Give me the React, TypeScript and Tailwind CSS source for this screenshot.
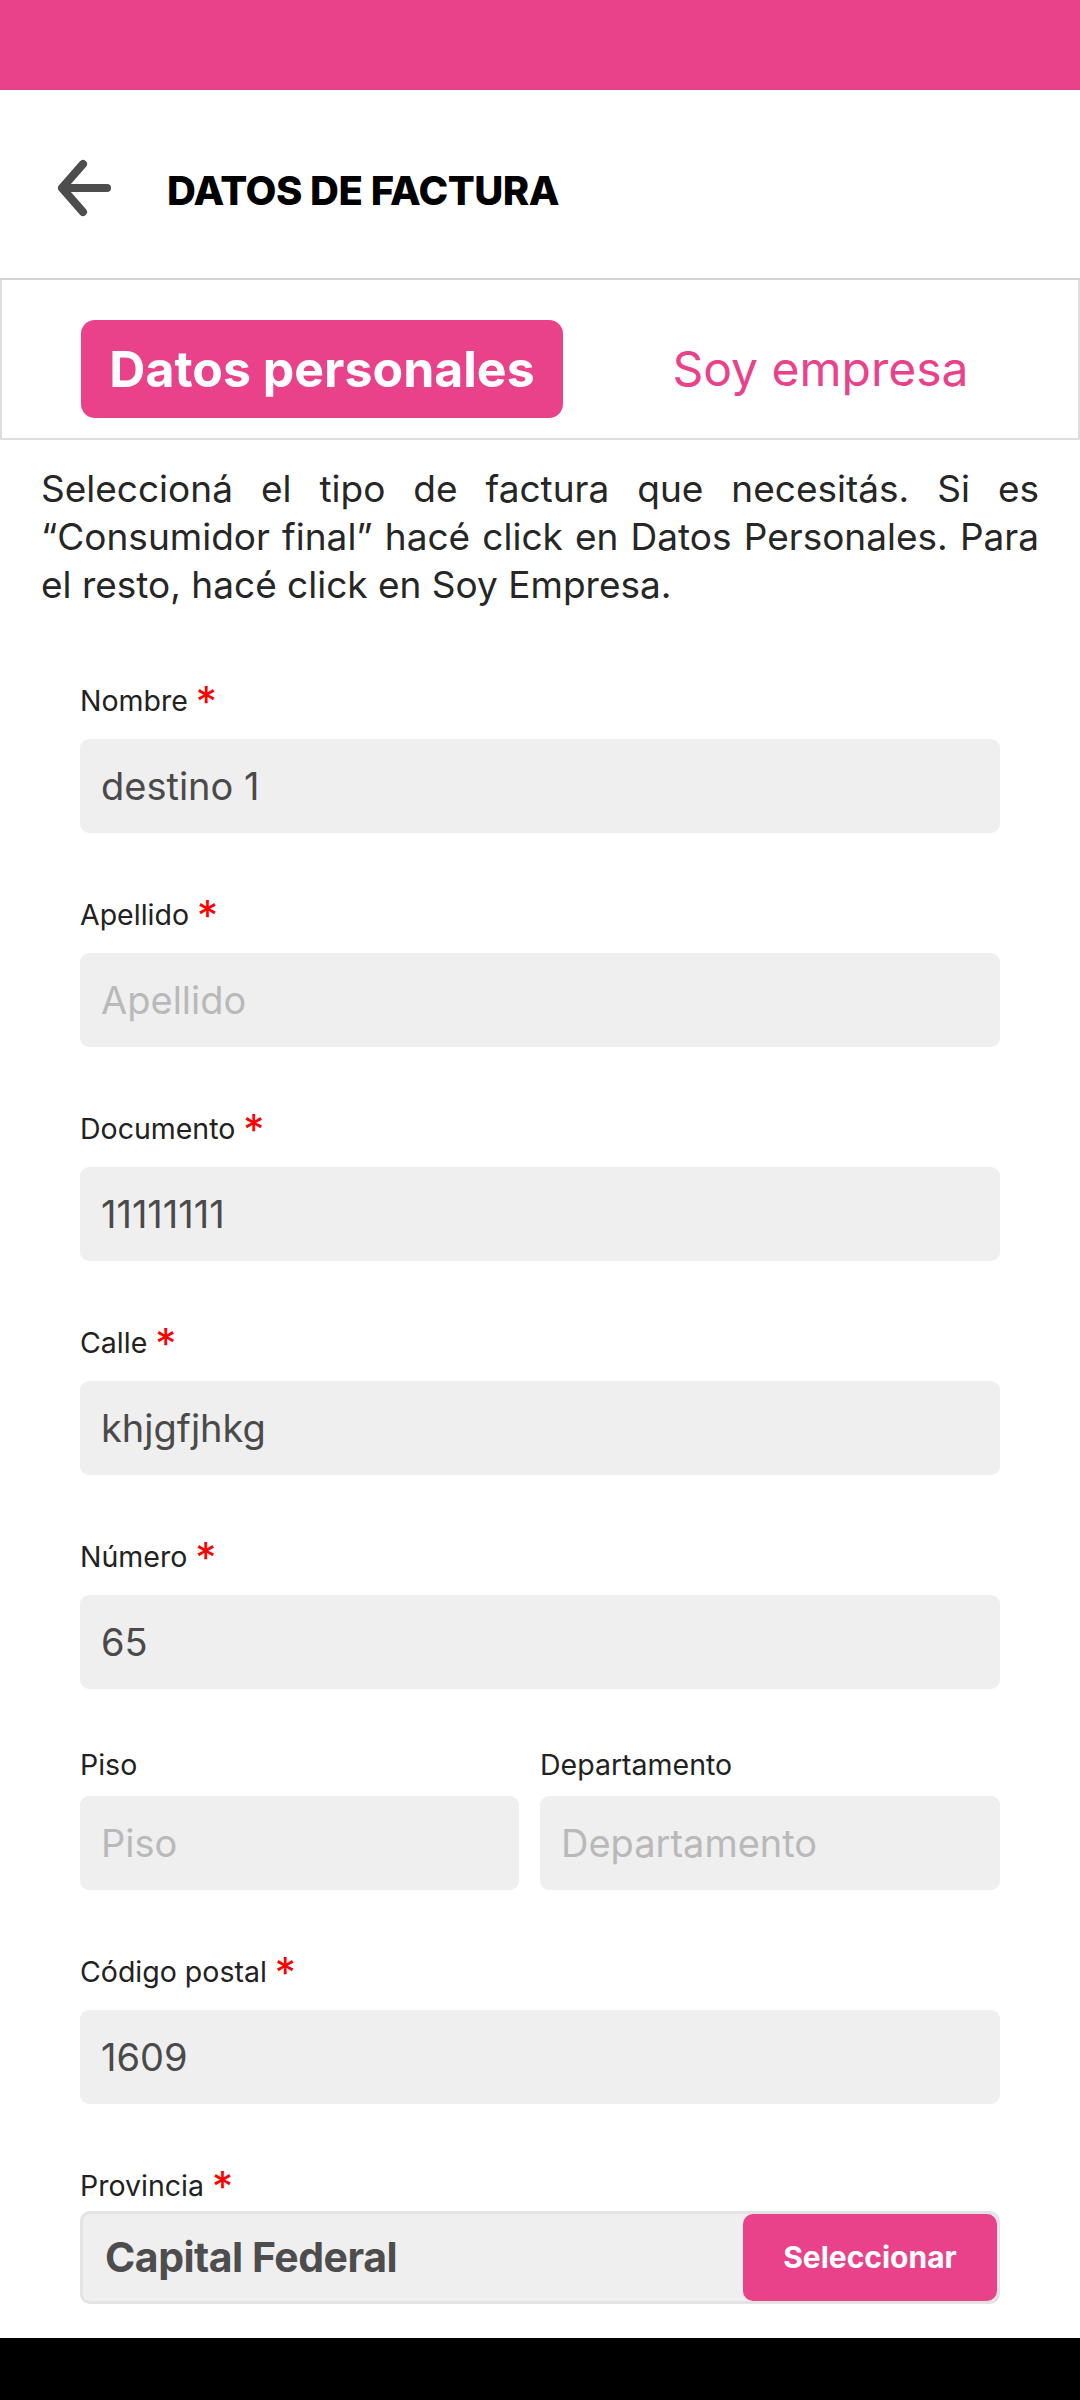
const font = { fontFamily: 'Inter, "Noto Sans", sans-serif' }

interface FieldProps {
  label: string
  required?: boolean
  value?: string
  placeholder?: string
  gap?: string
}

function Label({ label, required }: { label: string; required?: boolean }) {
  return (
    <div className="h-[34px] flex items-start text-[28.5px] leading-[34px] text-[#222]">
      <span>{label}</span>
      {required && <span className="ml-[8px] text-[42px] leading-[34px] text-[#ff0000] relative top-[1px]">*</span>}
    </div>
  )
}

function Field({ label, required, value, placeholder, gap = 'mt-[21px]' }: FieldProps) {
  return (
    <div>
      <Label label={label} required={required} />
      <div className={`${gap} h-[94px] rounded-[9px] bg-[#efefef] px-[21px] flex items-center text-[38px]`}>
        {value ? <span className="text-[#4a4a4a]">{value}</span> : <span className="text-[#b9b9b9]">{placeholder}</span>}
      </div>
    </div>
  )
}

export default function App() {
  return (
    <div className="w-[1080px] h-[2400px] flex flex-col bg-white overflow-hidden" style={font}>
      <div className="h-[90px] bg-[#e9428b] shrink-0" />

      {/* header */}
      <div className="h-[190px] shrink-0 flex items-center pt-[8px] border-b-2 border-[#d2d2d2]">
        <svg width="60" height="60" viewBox="0 0 60 60" className="ml-[52px]">
          <path d="M31 6 L10 30 L31 54 M10 30 L55 30" fill="none" stroke="#4d4d4d" strokeWidth="8" strokeLinecap="round" strokeLinejoin="round" />
        </svg>
        <h1 className="ml-[55px] mt-[6px] text-[40px] font-extrabold text-black leading-none tracking-[-0.5px]">DATOS DE FACTURA</h1>
      </div>

      {/* tabs */}
      <div className="shrink-0 flex items-center border-x-2 border-b-2 border-[#dedede] pt-[40px] pb-[20px] pl-[79px]">
        <button className="w-[482px] h-[98px] rounded-[14px] bg-[#e9428b] text-white text-[50px] font-bold">
          Datos personales
        </button>
        <div className="flex-1 text-center text-[48px] text-[#e9428b]">Soy empresa</div>
      </div>

      <div className="flex-1 overflow-hidden">
        <p className="mt-[25px] px-[41px] text-[37px] leading-[48px] text-[#262626] text-justify">
          Seleccioná el tipo de factura que necesitás. Si es “Consumidor final” hacé click en Datos Personales. Para el
          resto, hacé click en Soy Empresa.
        </p>

        <div className="px-[80px] mt-[75px] flex flex-col gap-[65px]">
          <Field label="Nombre" required value="destino 1" />
          <Field label="Apellido" required placeholder="Apellido" />
          <Field label="Documento" required value="11111111" />
          <Field label="Calle" required value="khjgfjhkg" />
          <Field label="Número" required value="65" />

          <div className="grid grid-cols-[439px_1fr] gap-x-[21px] -mt-[6px]">
            <Field label="Piso" placeholder="Piso" gap="mt-[14px]" />
            <Field label="Departamento" placeholder="Departamento" gap="mt-[14px]" />
          </div>

          <Field label="Código postal" required value="1609" />

          <div>
            <Label label="Provincia" required />
            <div className="mt-[8px] h-[93px] rounded-[10px] border-[3px] border-[#e3e3e3] bg-[#efefef] flex items-stretch">
              <div className="flex-1 flex items-center pl-[22px] text-[41px] font-bold text-[#4d4d4d] tracking-[-0.5px]">
                Capital Federal
              </div>
              <button className="w-[254px] rounded-[10px] bg-[#e9428b] text-white text-[30px] font-bold">Seleccionar</button>
            </div>
          </div>
        </div>
      </div>

      <div className="h-[62px] bg-black shrink-0" />
    </div>
  )
}
